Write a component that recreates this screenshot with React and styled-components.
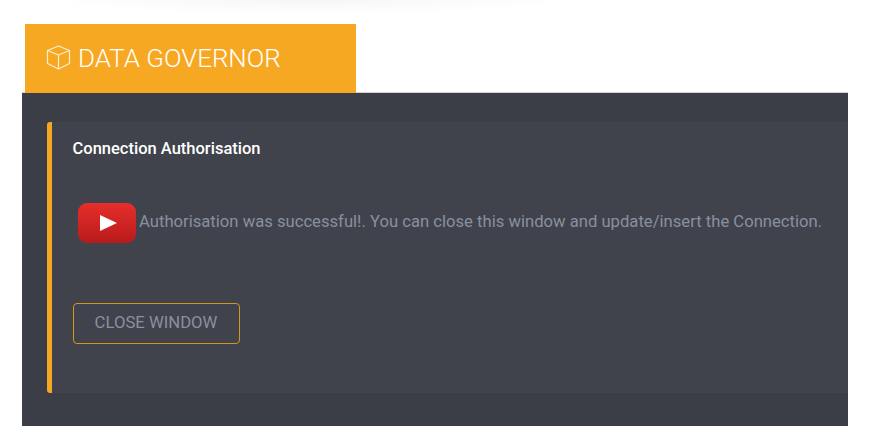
import React from 'react';
import styled, { createGlobalStyle } from 'styled-components';

const GlobalStyle = createGlobalStyle`
  html, body {
    margin: 0;
    padding: 0;
    background: #fff;
    font-family: Roboto, "Liberation Sans", sans-serif;
  }
`;

const Page = styled.div`
  width: 870px;
  height: 441px;
  overflow: hidden;
`;

const TopFade = styled.div`
  height: 24px;
  background: radial-gradient(ellipse 260px 14px at 310px 0, #f6f6f6, #fff);
`;

const Brand = styled.div`
  position: relative;
  display: flex;
  align-items: center;
  gap: 7px;
  box-sizing: border-box;
  width: 331px;
  height: 69px;
  margin: 0 0 -1px 25px;
  padding: 0 0 1px 21px;
  background: #f7a823;
  color: #fff;
  font-size: 25.9px;
  font-weight: 300;

  svg {
    margin-top: -2px;
  }
`;

const Panel = styled.main`
  box-sizing: border-box;
  width: 826px;
  height: 334px;
  margin-left: 22px;
  padding: 29px 0 33px 25px;
  background: #3b3e47;
  border-top: 1px solid #d2d2d2;
`;

const Card = styled.section`
  box-sizing: border-box;
  height: 271px;
  padding: 17px 0 0 20.5px;
  background: #40434c;
  border-left: 5px solid #f7a823;
  border-radius: 3px 0 0 3px;
`;

const CardTitle = styled.h2`
  margin: 0;
  color: #fff;
  font-size: 16.5px;
  line-height: 20px;
  font-weight: 500;
`;

const Message = styled.div`
  display: flex;
  align-items: center;
  gap: 3px;
  margin: 41px 0 0 5.5px;
  color: #89909f;
  font-size: 16.65px;
  line-height: 40px;
  white-space: nowrap;

  svg {
    margin-top: 3px;
  }
`;

const CloseButton = styled.button`
  display: block;
  box-sizing: border-box;
  width: 167px;
  height: 41px;
  margin-top: 60px;
  padding: 0 0 3px;
  background: transparent;
  border: 1px solid #d3961f;
  border-radius: 4px;
  color: #89909f;
  font-family: inherit;
  font-size: 16.7px;
`;

const CubeIcon = () => (
  <svg width="25" height="25" viewBox="0 0 25 25" fill="none" stroke="#ffeed2" strokeWidth="1.2" strokeLinejoin="round">
    <path d="M12.5 1 L23.5 5.5 V18.5 L12.5 24 L1.5 18.5 V5.5 Z" />
    <path d="M1.5 5.5 L12.5 10 L23.5 5.5 M12.5 10 V24" />
  </svg>
);

const YoutubeIcon = () => (
  <svg width="58" height="40" viewBox="0 0 58 40">
    <defs>
      <linearGradient id="yt" x1="0" y1="0" x2="0" y2="1">
        <stop offset="0" stopColor="#e72e2a" />
        <stop offset="1" stopColor="#b81a1c" />
      </linearGradient>
    </defs>
    <rect width="58" height="40" rx="9" fill="url(#yt)" />
    <path d="M22 12 L39 20 L22 28 Z" fill="#fff" />
  </svg>
);

export default function App() {
  return (
    <Page>
      <GlobalStyle />
      <TopFade />
      <Brand>
        <CubeIcon />
        DATA GOVERNOR
      </Brand>
      <Panel>
        <Card>
          <CardTitle>Connection Authorisation</CardTitle>
          <Message>
            <YoutubeIcon />
            Authorisation was successful!. You can close this window and update/insert the Connection.
          </Message>
          <CloseButton>CLOSE WINDOW</CloseButton>
        </Card>
      </Panel>
    </Page>
  );
}
